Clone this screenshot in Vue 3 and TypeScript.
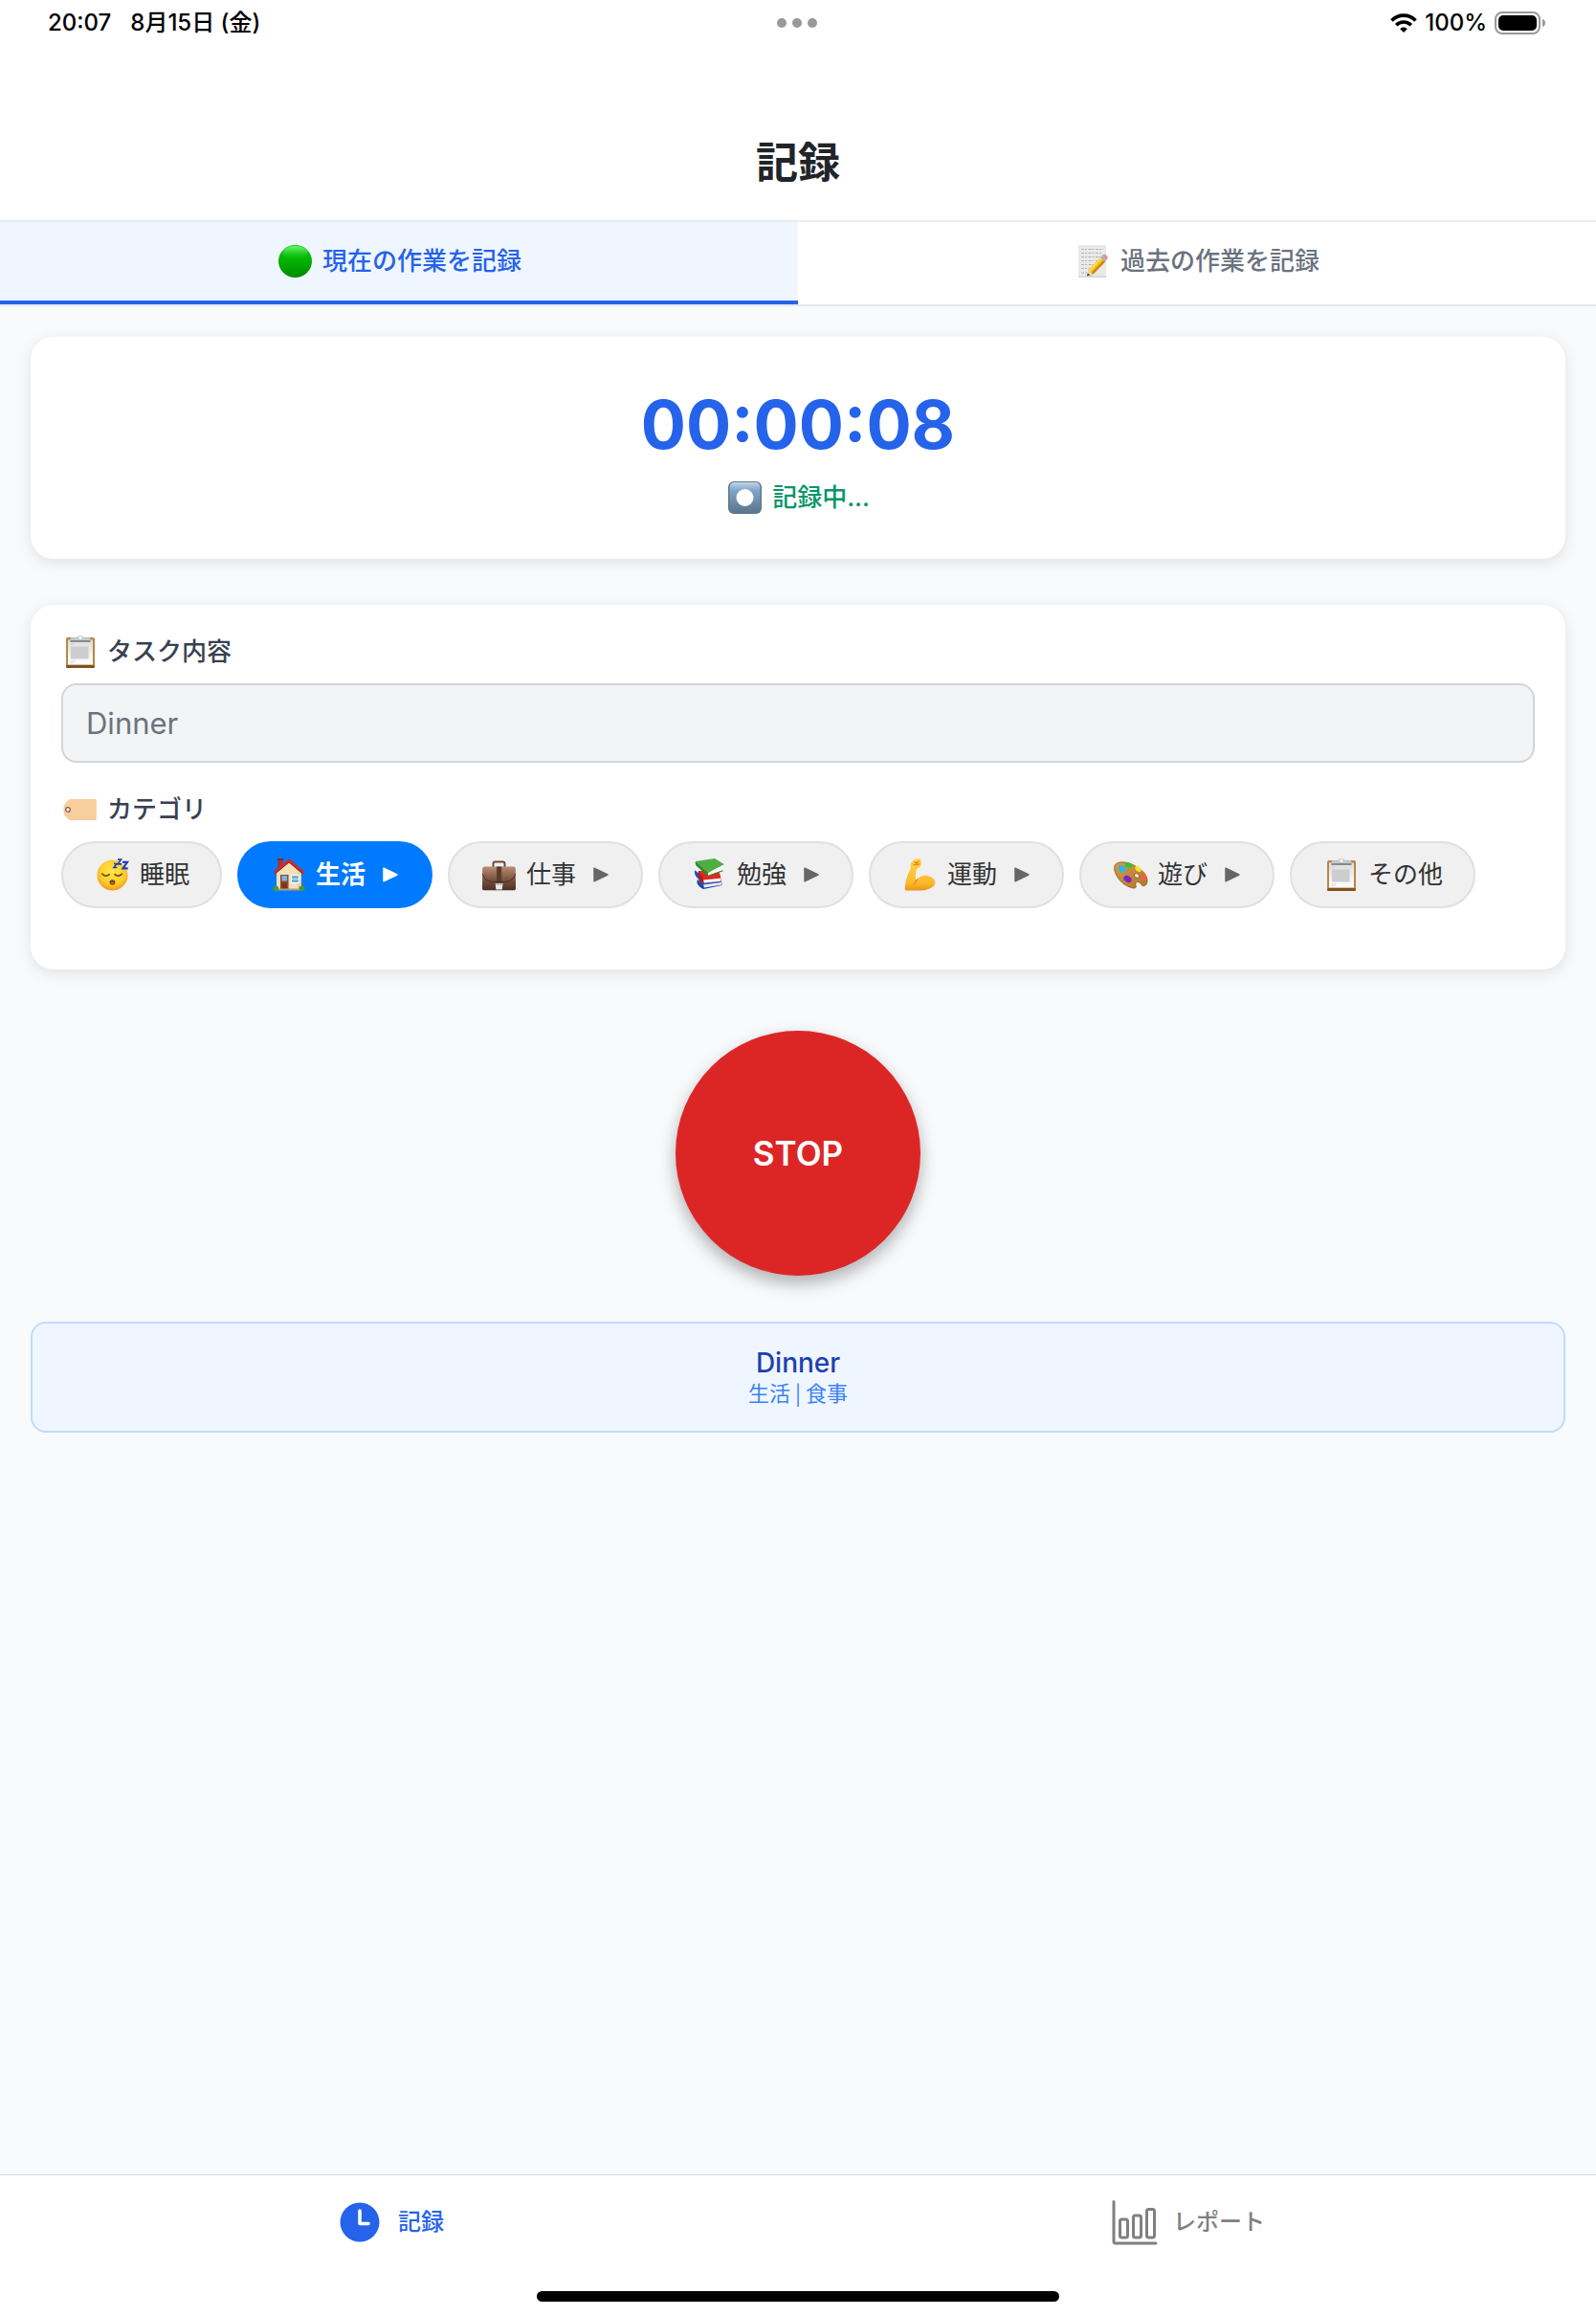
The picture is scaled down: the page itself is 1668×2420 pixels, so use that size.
<script setup lang="ts">
import { ref } from 'vue'

interface Category {
  name: string
  icon: string
  expandable: boolean
}

const tabs = [
  { id: 'current', icon: 'green', label: '現在の作業を記録' },
  { id: 'past', icon: 'memo', label: '過去の作業を記録' },
]

const categories: Category[] = [
  { name: '睡眠', icon: 'sleep', expandable: false },
  { name: '生活', icon: 'house', expandable: true },
  { name: '仕事', icon: 'briefcase', expandable: true },
  { name: '勉強', icon: 'books', expandable: true },
  { name: '運動', icon: 'muscle', expandable: true },
  { name: '遊び', icon: 'palette', expandable: true },
  { name: 'その他', icon: 'clipboard', expandable: false },
]

const activeTab = ref('current')
const selected = ref('生活')
const task = ref('Dinner')
const elapsed = ref('00:00:08')
</script>

<template>
  <div class="app">
    <svg class="sprite" aria-hidden="true">
      <defs>
        <linearGradient id="g-green" x1="0" y1="0" x2="0" y2="1">
          <stop offset="0" stop-color="#1fc41f" />
          <stop offset=".45" stop-color="#02b402" />
          <stop offset="1" stop-color="#008a00" />
        </linearGradient>
        <linearGradient id="g-shine" x1="0" y1="0" x2="0" y2="1">
          <stop offset="0" stop-color="#6dff6d" />
          <stop offset="1" stop-color="#0bbd0b" stop-opacity="0" />
        </linearGradient>
        <linearGradient id="g-rec" x1="0" y1="0" x2="0" y2="1">
          <stop offset="0" stop-color="#c3d5e6" />
          <stop offset=".28" stop-color="#7fa3c8" />
          <stop offset="1" stop-color="#5c778f" />
        </linearGradient>
        <linearGradient id="g-paper" x1="0" y1="0" x2="0" y2="1">
          <stop offset="0" stop-color="#dcdcdc" />
          <stop offset="1" stop-color="#ffffff" />
        </linearGradient>
        <radialGradient id="g-face" cx=".5" cy=".4" r=".6">
          <stop offset="0" stop-color="#ffe94a" />
          <stop offset=".7" stop-color="#fdc92d" />
          <stop offset="1" stop-color="#ee9a1c" />
        </radialGradient>
        <linearGradient id="g-case" x1="0" y1="0" x2="0" y2="1">
          <stop offset="0" stop-color="#b98f74" />
          <stop offset=".5" stop-color="#7d5844" />
          <stop offset="1" stop-color="#4d2f22" />
        </linearGradient>
        <linearGradient id="g-arm" x1="0" y1="0" x2="0" y2="1">
          <stop offset="0" stop-color="#ffd24a" />
          <stop offset=".75" stop-color="#fdbb2b" />
          <stop offset="1" stop-color="#e8951a" />
        </linearGradient>
        <linearGradient id="g-palette" x1="0" y1="0" x2="1" y2="1">
          <stop offset="0" stop-color="#cf9a4a" />
          <stop offset="1" stop-color="#b5752a" />
        </linearGradient>
      </defs>

      <symbol id="e-green" viewBox="0 0 36 34">
        <ellipse cx="17.500" cy="17" rx="17.500" ry="17" fill="url(#g-green)" />
        <ellipse cx="17.500" cy="8.500" rx="13" ry="7.500" fill="url(#g-shine)" />
      </symbol>

      <symbol id="e-memo" viewBox="0 0 36 34">
        <rect x="2" y="0" width="29" height="34" fill="#e9e9e9" />
        <rect x="2" y="32.500" width="29" height="1.500" fill="#d4d4d4" />
        <g stroke="#b4b4b4" stroke-width="1.100" stroke-dasharray="3 1 2 1.500" fill="none">
          <path d="M5 4.500h23M5 8.500h21M5 12.500h20M5 16.500h18M5 20.500h14M5 24.500h11M5 29h6" />
        </g>
        <path d="M13 33l3-1 14-15 -3-3z" fill="#000" opacity=".15" />
        <path d="M11 32.500l1.500-6.500L25 13l5 4.500L17.500 30.500z" fill="#f3b71e" />
        <path d="M12.500 26L25 13l2 1.800L14.500 28z" fill="#ffd84a" />
        <path d="M15.800 29.200L28.300 16.200l1.700 1.300L17.500 30.500z" fill="#c98508" />
        <path d="M11 32.500l1.500-6.500 5 4.500z" fill="#ecd29e" />
        <path d="M11 32.500l.8-3 2.100 1.900z" fill="#333" />
        <path d="M25 13l1.800-1.900 5 4.500L30 17.500z" fill="#a5b4c0" />
        <path d="M26.800 11.100c1.500-1.600 3-1.700 4.500-.3 1.700 1.600 1.800 3.100.5 4.800z" fill="#f08a8c" />
      </symbol>

      <symbol id="e-record" viewBox="0 0 36 34">
        <rect x="0" y="0" width="35" height="34" rx="6" fill="#5f7890" />
        <rect x="1.500" y="1" width="32" height="31" rx="5" fill="url(#g-rec)" />
        <ellipse cx="17.500" cy="17" rx="9" ry="9" fill="#fff" />
      </symbol>

      <symbol id="e-clipboard" viewBox="0 0 36 34">
        <rect x="3" y="2" width="30" height="32" rx="2" fill="#b98743" />
        <rect x="3" y="31" width="30" height="3" rx="1.500" fill="#80531f" />
        <rect x="5" y="4.500" width="26" height="26" fill="url(#g-paper)" />
        <rect x="8" y="11.500" width="18.500" height="13" fill="#cdcdcd" />
        <path d="M7.500 9h4M7.500 27h5M7.500 28.800h3" stroke="#c9c9c9" stroke-width=".8" />
        <path d="M7.500 6.500V4c0-1.200.8-1.700 2-1.700h4.800C15 .7 16.300 0 18 0s3 .7 3.700 2.300h4.800c1.200 0 2 .5 2 1.700v2.500z" fill="#c4cbd1" />
        <rect x="7.500" y="5" width="21" height="2" fill="#858b90" />
        <circle cx="18" cy="2.500" r="1.400" fill="#fff" />
      </symbol>

      <symbol id="e-tag" viewBox="0 0 36 34">
        <path d="M7.500 6h26c.8 0 1.300.5 1.300 1.300v19.200c0 .8-.5 1.300-1.300 1.300h-26C3.500 25.800.5 22 .5 19.500v-5C.5 12 3.500 8 7.500 6z" fill="#f7cf9d" />
        <path d="M1 20c.8 2.800 3.300 6 6.800 7.300h26.500" fill="none" stroke="#efc48f" />
        <circle cx="5" cy="17" r="2.300" fill="#fff" stroke="#8a5a4a" stroke-width="1.300" />
      </symbol>

      <symbol id="e-sleep" viewBox="0 0 36 34">
        <circle cx="17.500" cy="17.500" r="16" fill="url(#g-face)" />
        <path d="M7 16.300c1.700 2.300 5.300 2.300 7.300.3M20 16.600c2 2 5.600 2 7.300-.3" fill="none" stroke="#7a4a12" stroke-width="1.800" stroke-linecap="round" />
        <ellipse cx="17.500" cy="25" rx="2.900" ry="2.700" fill="#7a4315" />
        <ellipse cx="17.500" cy="25.800" rx="1.400" ry="1.200" fill="#b96a2a" />
        <g fill="none" stroke="#1d3fc4" stroke-linejoin="miter">
          <path d="M19 5.500h3l-3 4h3.300" stroke-width="1.600" />
          <path d="M23 1.200h3.500l-3.300 4.600h3.800" stroke-width="1.700" />
          <path d="M28 3.800h5l-4.500 6.600h5.200" stroke-width="2.200" />
        </g>
      </symbol>

      <symbol id="e-house" viewBox="0 0 36 34">
        <rect x="6.500" y="1" width="5" height="11" fill="#b0302b" />
        <rect x="5.800" y="0" width="6.400" height="2" fill="#8c2320" />
        <path d="M5 15L18 3l13 12v17H5z" fill="#f3dfb8" />
        <path d="M18 3l13 12v17h-4V13z" fill="#e6cb9a" opacity=".7" />
        <path d="M3.500 14.500L18 2l14.500 12.500" fill="none" stroke="#c3322d" stroke-width="3" stroke-linejoin="round" stroke-linecap="round" />
        <path d="M3.500 16L18 4 32.500 16" fill="none" stroke="#8c2320" stroke-width="1" />
        <rect x="9" y="17" width="8.500" height="15.500" fill="#8c4b2c" />
        <rect x="10.500" y="18" width="5.500" height="5.500" fill="#76b8e0" />
        <rect x="10.500" y="25.500" width="5.500" height="6" fill="#74391f" />
        <rect x="20" y="17" width="9" height="9" fill="#fff" />
        <rect x="21" y="18" width="7" height="7" fill="#6fb2df" />
        <path d="M21 21.500h7" stroke="#d7ecf8" stroke-width=".8" />
        <rect x="4" y="31.500" width="28" height="2" fill="#b5997a" />
        <ellipse cx="4.200" cy="31" rx="3" ry="2.600" fill="#4d9a2c" />
        <ellipse cx="31.500" cy="31" rx="3" ry="2.600" fill="#4d9a2c" />
      </symbol>

      <symbol id="e-briefcase" viewBox="0 0 36 34">
        <path d="M11.500 9V5.500c0-1.300.8-2 2-2h8c1.200 0 2 .7 2 2V9" fill="none" stroke="#6a4635" stroke-width="2" />
        <path d="M2.500 8.500h30c1.500 0 2.300.9 2.300 2.200L35 31c0 1.500-.7 2.300-2 2.300H2c-1.300 0-2-.8-2-2.300l.2-20.300c0-1.300.8-2.200 2.300-2.200z" fill="url(#g-case)" />
        <path d="M.3 16c1.500 5.500 6 8.500 12 8.500h10.500c6 0 10.500-3 12-8.500" fill="none" stroke="#4a2e21" stroke-width="1" />
        <rect x="15" y="8.500" width="5.200" height="15.500" fill="#5b3b2b" />
        <path d="M13.700 26h7.800l-.7 6.500h-6.400z" fill="#e8edf0" />
        <path d="M14 27h7.200" stroke="#8d979d" />
      </symbol>

      <symbol id="e-books" viewBox="0 0 36 34">
        <path d="M2 12.300l5 3.700 1.500 8.500L3.500 19C2 17 1.500 14.500 2 12.300z" fill="#2b50ad" />
        <path d="M4.500 22.500L28 22l2.500 3.500L11 29.500z" fill="#2f56b8" />
        <path d="M4.500 22.500l6.700 5 19-2.500.3 3L11.500 32c-2.500-.3-6-4-7-6.300z" fill="#2447a5" />
        <path d="M11 27.500l19-2.500v2.500L12 30.500z" fill="#ececf2" />
        <path d="M6 13l20.500-.5 2.200 4.500 1 7L9.500 25.500C7 21.500 5.500 17 6 13z" fill="#de2a22" />
        <path d="M6 13l4.500 6.500 1 6-2.500-.5C6.500 21 5.500 17 6 13z" fill="#b81c17" />
        <path d="M11 22.500l18-1.700v3L12 25.500z" fill="#fff" />
        <path d="M3 3l20-3 10 6.300L16 15z" fill="#4fae42" />
        <path d="M3 3l13 12v3.500L4 8C2.700 6.500 2.300 4.500 3 3z" fill="#2d8a2c" />
        <path d="M16 15l17-8.700c-2 2.500-2.500 4.500-1.500 6.200L16 18.300z" fill="#f6f6f6" />
        <path d="M16 18.200l15.500-5.400" stroke="#2d8a2c" stroke-width="1.200" />
      </symbol>

      <symbol id="e-muscle" viewBox="0 0 36 34">
        <path d="M11 1.500C13 0 17.500-.4 18.300 1.500c.9 2 .8 5-.6 7-1 1.400-2.800 1.500-3.700 2.700-.9 1.500-1 5.800-1.300 9.300-.1 1.500.8 2 1.800 1.200 3-3 7.500-4.700 11.500-3.500 4 1 7.300 3.400 7.300 7 0 4.500-7 8.300-17 8.300H3.500c-1.300 0-1.900-.8-1.800-2.300.5-9 3.500-15.500 6.300-21.500-1.300-3 .3-6.500 3-8.200z" fill="url(#g-arm)" />
        <path d="M14.500 21.700l-3.300 5.500M11.500 4c1.500.8 3.500.5 5-.8M11 6.500c2 .8 4.500.3 6-.8M14 3.500v2.800" fill="none" stroke="#c97c12" stroke-width="1" stroke-linecap="round" />
      </symbol>

      <symbol id="e-palette" viewBox="0 0 36 34">
        <path d="M1 7.500c2-4.300 10-5 18.500-1.200C28.500 10.400 35.500 17 35 24c-.2 3.700-3 5.500-5 4.500-1.700-.9-1.600-3.300-4-3.800-2.700-.5-3.800 1.200-3 3 .7 1.700.2 3.500-2 3.400C15 30.500 6.500 25.500 2.500 17 .8 13.500 0 10 1 7.500z" fill="url(#g-palette)" stroke="#8c5a20" stroke-width=".8" />
        <ellipse cx="8.700" cy="11" rx="4.200" ry="3.200" transform="rotate(35 8.700 11)" fill="#2fb5e8" />
        <ellipse cx="15.500" cy="7" rx="3.800" ry="2.500" transform="rotate(20 15.500 7)" fill="#27c437" />
        <ellipse cx="25.500" cy="11" rx="3.700" ry="2.400" transform="rotate(42 25.500 11)" fill="#f8e22c" />
        <ellipse cx="31.500" cy="19.500" rx="3.600" ry="2.100" transform="rotate(60 31.500 19.500)" fill="#fa5a48" />
        <ellipse cx="14.500" cy="21.500" rx="4.400" ry="3.200" transform="rotate(30 14.500 21.500)" fill="#7a22c8" />
        <ellipse cx="24" cy="18" rx="2.700" ry="2.100" transform="rotate(35 24 18)" fill="#f0f0f0" stroke="#84531c" stroke-width=".8" />
      </symbol>
    </svg>

    <div class="status-bar">
      <div class="status-side">
        <span>20:07</span>
        <span>8月15日 (金)</span>
      </div>
      <div class="dots"><i></i><i></i><i></i></div>
      <div class="status-side status-right">
        <svg class="wifi" viewBox="0 0 28 20" aria-hidden="true">
          <path d="M1.500 7.400C8.500.4 19.500.4 26.500 7.400" fill="none" stroke="#000" stroke-width="3.600" />
          <path d="M6.200 12.200C10.500 7.900 17.500 7.900 21.800 12.200" fill="none" stroke="#000" stroke-width="3.600" />
          <path d="M10.200 16.200C12.400 14 15.600 14 17.800 16.200L14 20z" fill="#000" />
        </svg>
        <span>100%</span>
        <svg class="battery" viewBox="0 0 54 24" aria-hidden="true">
          <rect x="1" y="1" width="46" height="22" rx="7" fill="none" stroke="#999" stroke-width="2" />
          <rect x="4" y="4" width="40" height="16" rx="5" fill="#000" />
          <path d="M50 8c2 .6 3 2 3 4s-1 3.400-3 4z" fill="#999" />
        </svg>
      </div>
    </div>

    <header class="header">
      <h1>記録</h1>
    </header>

    <div class="tabs" role="tablist">
      <button
        v-for="t in tabs"
        :key="t.id"
        type="button"
        role="tab"
        class="tab"
        :class="{ active: activeTab === t.id }"
        :aria-selected="activeTab === t.id"
        @click="activeTab = t.id"
      >
        <svg class="emoji" aria-hidden="true"><use :href="'#e-' + t.icon" /></svg>
        <span>{{ t.label }}</span>
      </button>
    </div>

    <main class="main">
      <section class="card timer-card">
        <div class="timer">{{ elapsed }}</div>
        <div class="recording">
          <svg class="emoji" aria-hidden="true"><use href="#e-record" /></svg>
          <span>記録中...</span>
        </div>
      </section>

      <section class="card form-card">
        <label class="label" for="task">
          <svg class="emoji" aria-hidden="true"><use href="#e-clipboard" /></svg>
          <span>タスク内容</span>
        </label>
        <input id="task" v-model="task" class="input" type="text" readonly />
        <div id="category-label" class="label">
          <svg class="emoji" aria-hidden="true"><use href="#e-tag" /></svg>
          <span>カテゴリ</span>
        </div>
        <div class="chips" role="group" aria-labelledby="category-label">
          <button
            v-for="c in categories"
            :key="c.name"
            type="button"
            class="chip"
            :class="{ active: selected === c.name }"
            :aria-pressed="selected === c.name"
            @click="selected = c.name"
          >
            <svg class="emoji" aria-hidden="true"><use :href="'#e-' + c.icon" /></svg>
            <span>{{ c.name }}</span>
            <svg v-if="c.expandable" class="arrow" viewBox="0 0 16 16" aria-hidden="true">
              <path d="M1 1.200v13.600L15 8z" fill="currentColor" stroke="currentColor" stroke-width="1.500" stroke-linejoin="round" />
            </svg>
          </button>
        </div>
      </section>

      <button type="button" class="stop">STOP</button>

      <section class="current">
        <div class="current-task">{{ task }}</div>
        <div class="current-category">生活 | 食事</div>
      </section>
    </main>

    <footer class="footer">
      <nav class="nav">
        <a href="#record" class="nav-item active">
          <svg class="nav-icon" viewBox="0 0 48 48" aria-hidden="true">
            <circle cx="24" cy="24" r="20.500" fill="currentColor" />
            <path d="M24 12v13.500h9" fill="none" stroke="#fff" stroke-width="3.600" stroke-linecap="round" stroke-linejoin="round" />
          </svg>
          <span>記録</span>
        </a>
        <a href="#report" class="nav-item">
          <svg class="nav-icon" viewBox="0 0 48 48" aria-hidden="true">
            <g fill="none" stroke="currentColor" stroke-width="3" stroke-linecap="round" stroke-linejoin="round">
              <path d="M2 2.500V44c0 1.300.7 2 2 2h42" />
              <rect x="8.500" y="21" width="8" height="19" rx="2" />
              <rect x="22.500" y="17" width="8" height="23" rx="2" />
              <rect x="36.500" y="10.500" width="8" height="29.500" rx="2" />
            </g>
          </svg>
          <span>レポート</span>
        </a>
      </nav>
      <div class="home-indicator"></div>
    </footer>
  </div>
</template>

<style>
body {
  background: #f9fafc;
}
</style>

<style scoped>
.app {
  min-height: 100vh;
  display: flex;
  flex-direction: column;
  font-family: Inter, "Noto Sans CJK JP", sans-serif;
  font-size: 26px;
  background: #f9fafc;
}
.app *,
.app {
  box-sizing: border-box;
}
.sprite {
  position: absolute;
  width: 0;
  height: 0;
}
button {
  margin: 0;
  font-family: inherit;
  font-size: inherit;
  cursor: pointer;
}
.emoji {
  flex: none;
  width: 36px;
  height: 34px;
  margin: 0 10px 0 2px;
}

.status-bar {
  display: grid;
  grid-template-columns: 1fr auto 1fr;
  align-items: center;
  height: 48px;
  padding: 0 52px 0 50px;
  background: #fff;
  color: #000;
  font-size: 24px;
  line-height: 28px;
  font-weight: 500;
}
.status-side {
  display: flex;
  align-items: center;
  gap: 20px;
  white-space: nowrap;
}
.status-side span {
  height: 28px;
}
.status-right {
  justify-content: flex-end;
  gap: 8px;
}
.dots {
  display: flex;
  gap: 6px;
}
.dots i {
  width: 10px;
  height: 10px;
  border-radius: 50%;
  background: #999;
}
.wifi {
  width: 28px;
  height: 20px;
}
.battery {
  width: 54px;
  height: 24px;
}

.header {
  padding: 92px 32px 30px;
  background: #fff;
  border-bottom: 2px solid #e9ecef;
  text-align: center;
}
h1 {
  margin: 0;
  font-size: 44px;
  line-height: 60px;
  font-weight: 700;
  color: #212529;
}

.tabs {
  display: flex;
  background: #fff;
  border-bottom: 2px solid #e5e7eb;
}
.tab {
  flex: 1;
  display: flex;
  align-items: center;
  justify-content: center;
  height: 86px;
  padding: 0;
  border: 0;
  border-bottom: 4px solid transparent;
  background: none;
  color: #6b7280;
  font-weight: 500;
  line-height: 34px;
}
.tab.active {
  background: #eff6ff;
  border-bottom-color: #2563eb;
  color: #2563eb;
}
.tab span,
.chip span,
.nav-item span {
  height: 34px;
}

.main {
  flex: 1;
  display: flex;
  flex-direction: column;
  padding: 32px;
}
.card {
  background: #fff;
  border-radius: 24px;
  box-shadow: 0 4px 16px rgba(0, 0, 0, 0.1);
}
.timer-card {
  padding: 48px 32px 46px;
  text-align: center;
}
.timer {
  font-size: 70px;
  line-height: 88px;
  font-weight: 700;
  color: #2563eb;
}
.recording {
  display: flex;
  align-items: center;
  justify-content: center;
  margin-top: 14px;
  line-height: 36px;
  font-weight: 500;
  color: #059669;
}
.form-card {
  margin-top: 48px;
  padding: 32px 32px 64px;
}
.label {
  display: flex;
  align-items: center;
  margin-bottom: 16px;
  line-height: 34px;
  font-weight: 500;
  color: #374151;
}
.input {
  display: block;
  width: 100%;
  height: 83px;
  margin: 0 0 32px;
  padding: 0 24px;
  border: 2px solid #d1d5db;
  border-radius: 16px;
  background: #f3f4f6;
  color: #6b7280;
  font-family: inherit;
  font-size: 31px;
  outline: none;
}
.chips {
  display: flex;
  flex-wrap: wrap;
  gap: 16px;
}
.chip {
  display: flex;
  align-items: center;
  height: 70px;
  padding: 0 32px;
  border: 2px solid #e0e0e0;
  border-radius: 35px;
  background: #f0f0f0;
  color: #333;
  line-height: 34px;
}
.chip.active {
  background: #007aff;
  border-color: #007aff;
  color: #fff;
  font-weight: 600;
}
.arrow {
  width: 16px;
  height: 16px;
  margin: 0 2px 0 18px;
  color: #666;
}
.chip.active .arrow {
  color: #fff;
}

.stop {
  align-self: center;
  width: 256px;
  height: 256px;
  margin-top: 64px;
  padding: 0;
  border: 0;
  border-radius: 50%;
  background: #dc2626;
  box-shadow: 0 8px 18px rgba(0, 0, 0, 0.3);
  color: #fff;
  font-size: 35px;
  font-weight: 600;
}
.current {
  margin-top: 48px;
  padding: 24px 24px 28px;
  border: 2px solid #bfdbfe;
  border-radius: 16px;
  background: #eff6ff;
  text-align: center;
}
.current-task {
  font-size: 28px;
  line-height: 34px;
  font-weight: 500;
  color: #1e40af;
}
.current-category {
  font-family: "Noto Sans CJK JP", sans-serif;
  font-size: 22px;
  line-height: 26px;
  color: #3b82f6;
}

.footer {
  padding-bottom: 15px;
  background: #fff;
  border-top: 1px solid #d8d8d8;
}
.nav {
  display: flex;
}
.nav-item {
  flex: 1;
  display: flex;
  align-items: center;
  justify-content: center;
  gap: 16px;
  height: 98px;
  padding-right: 18px;
  color: #808080;
  font-size: 24px;
  line-height: 34px;
  font-weight: 500;
  text-decoration: none;
}
.nav-item.active {
  color: #2563eb;
}
.nav-icon {
  width: 48px;
  height: 48px;
}
.home-indicator {
  width: 546px;
  height: 11px;
  margin: 23px auto 0;
  border-radius: 6px;
  background: #000;
}
</style>
